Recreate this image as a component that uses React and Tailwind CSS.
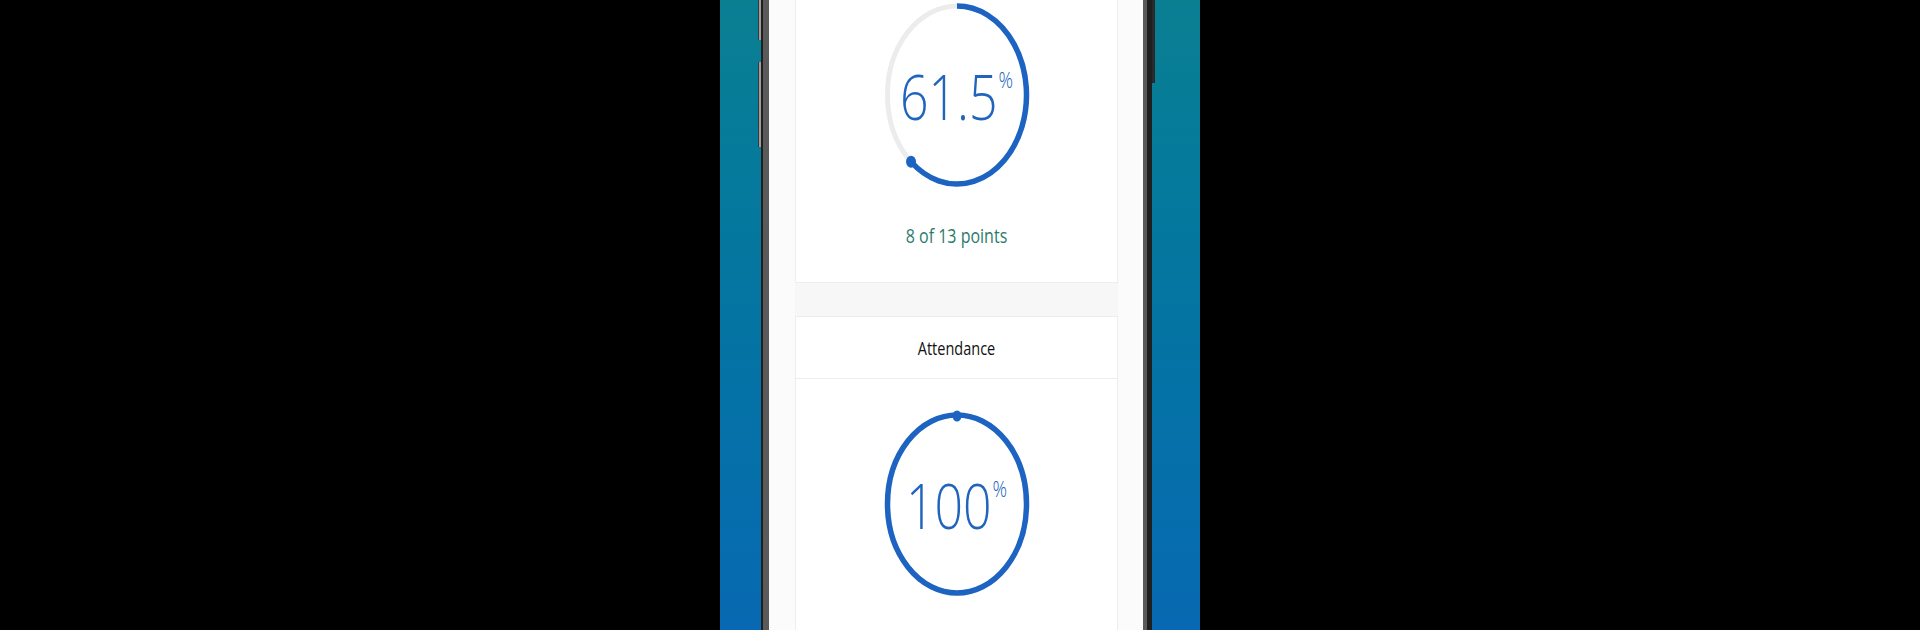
import React from 'react';

const BLUE = '#1d63c1';

// ring is drawn as an ellipse because the screenshot is stretched vertically
const Ring = ({ percent }) => {
  const cx = 75;
  const cy = 95;
  const rx = 69.5;
  const ry = 89;
  const angle = (percent / 100) * 2 * Math.PI;
  const ex = cx + rx * Math.sin(angle);
  const ey = cy - ry * Math.cos(angle);
  const large = percent > 50 ? 1 : 0;
  const full = percent >= 100;

  return (
    <svg width="150" height="190" viewBox="0 0 150 190">
      <ellipse cx={cx} cy={cy} rx={rx} ry={ry} fill="none" stroke="#ececec" strokeWidth="5" />
      {full ? (
        <>
          <ellipse cx={cx} cy={cy} rx={rx} ry={ry} fill="none" stroke={BLUE} strokeWidth="5.5" />
          <ellipse cx={cx} cy={cy - ry + 1} rx="4.5" ry="5.5" fill={BLUE} />
        </>
      ) : (
        <>
          <path
            d={`M ${cx} ${cy - ry} A ${rx} ${ry} 0 ${large} 1 ${ex} ${ey}`}
            fill="none"
            stroke={BLUE}
            strokeWidth="5.5"
          />
          <ellipse cx={ex} cy={ey} rx="5" ry="6" fill={BLUE} />
        </>
      )}
    </svg>
  );
};

const Gauge = ({ percent, label }) => (
  <div className="relative w-[150px] h-[190px]">
    <Ring percent={percent} />
    <div className="absolute inset-0 flex items-center justify-center pt-[2px]">
      <div className="flex items-start scale-y-[1.27] text-[#2064be]">
        <span className="text-[50px] leading-none font-light">{label}</span>
        <span className="text-[18px] leading-none font-light mt-[3px] ml-[1px]">%</span>
      </div>
    </div>
  </div>
);

const App = () => {
  return (
    <div
      className="w-full h-[630px] bg-black flex justify-center overflow-hidden"
      style={{ fontFamily: '"Open Sans", "Noto Sans", sans-serif' }}
    >
      <div className="w-[480px] h-full bg-gradient-to-b from-[#0a7f92] to-[#0869b2] flex pl-[38px]">
        {/* left side buttons */}
        <div className="w-[3px] flex flex-col">
          <div className="h-[40px] bg-[#9c9c9c] border-l border-[#3a3a3a]" />
          <div className="h-[22px]" />
          <div className="h-[85px] bg-[#9c9c9c] border-l border-[#3a3a3a]" />
        </div>

        {/* phone body */}
        <div className="w-[391px] h-full bg-[#1f1f1f] pl-[2px] pr-[5px]">
          <div className="h-full bg-[#5a5a5a] pl-[6px] pr-[4px]">
            <div className="h-full w-[374px] bg-[#fbfbfb] pl-[26px] pr-[25px]">
              <div className="w-[323px] h-full bg-[#f7f7f7] flex flex-col">
                {/* score card */}
                <div className="h-[283px] bg-white border-x border-b border-[#ededed] flex flex-col items-center">
                  <Gauge percent={61.5} label="61.5" />
                  <div className="mt-[33px] text-[16px] leading-6 text-[#2b7a6c] scale-y-[1.27]">
                    8 of 13 points
                  </div>
                </div>

                <div className="h-[33px]" />

                {/* attendance card */}
                <div className="flex-1 bg-white border-x border-t border-[#ededed] flex flex-col">
                  <div className="h-[62px] border-b border-[#ededed] flex items-center justify-center pt-[2px]">
                    <span className="text-[14.5px] font-medium text-[#111] scale-y-[1.27]">Attendance</span>
                  </div>
                  <div className="flex flex-col items-center pt-[30px]">
                    <Gauge percent={100} label="100" />
                  </div>
                </div>
              </div>
            </div>
          </div>
        </div>

        {/* right side button */}
        <div className="w-[3px] flex flex-col">
          <div className="h-[83px] bg-[#2a2a2a]" />
        </div>
      </div>
    </div>
  );
};

export default App;
